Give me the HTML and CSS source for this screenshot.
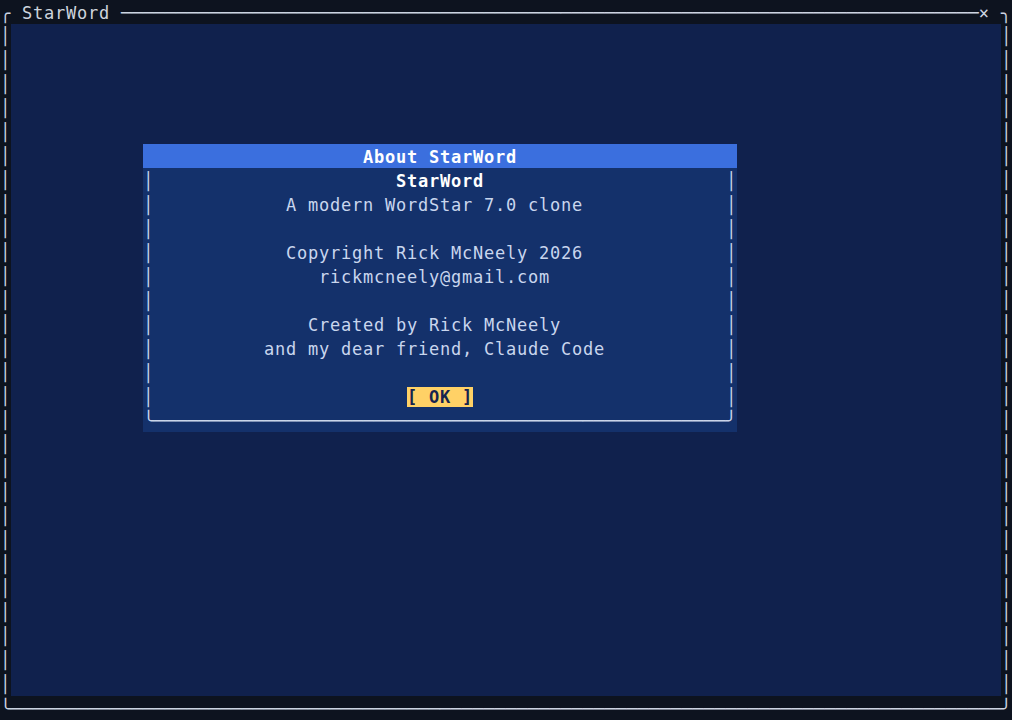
FILE: index.html
```html
<!DOCTYPE html>
<html lang="en">
<head>
    <meta charset="UTF-8">
    <meta name="viewport" content="width=device-width, initial-scale=1.0">
    <title>StarWord</title>
    <link rel="stylesheet" href="styles.css">
</head>
<body>

<div class="term">
    <!-- Window frame, top edge with the title and close mark -->
    <div class="frame-row">╭ <span class="app-name">StarWord</span> <span class="rule">──────────────────────────────────────────────────────────────────────────────</span>× ╮</div>

    <div class="frame-middle">
        <div class="frame-side">│
│
│
│
│
│
│
│
│
│
│
│
│
│
│
│
│
│
│
│
│
│
│
│
│
│
│
│</div>

        <!-- Editor area -->
        <div class="desk">
            <div class="dialog" role="dialog" aria-labelledby="about-title">
                <div class="dialog-title" id="about-title">About StarWord</div>
                <div class="dialog-body">
                    <div class="line"><span class="edge">│</span><span class="cell"><b class="product">                      StarWord</b></span><span class="edge">│</span></div>
                    <div class="line"><span class="edge">│</span><span class="cell">            A modern WordStar 7.0 clone</span><span class="edge">│</span></div>
                    <div class="line"><span class="edge">│</span><span class="cell"></span><span class="edge">│</span></div>
                    <div class="line"><span class="edge">│</span><span class="cell">            Copyright Rick McNeely 2026</span><span class="edge">│</span></div>
                    <div class="line"><span class="edge">│</span><span class="cell">               rickmcneely@gmail.com</span><span class="edge">│</span></div>
                    <div class="line"><span class="edge">│</span><span class="cell"></span><span class="edge">│</span></div>
                    <div class="line"><span class="edge">│</span><span class="cell">              Created by Rick McNeely</span><span class="edge">│</span></div>
                    <div class="line"><span class="edge">│</span><span class="cell">          and my dear friend, Claude Code</span><span class="edge">│</span></div>
                    <div class="line"><span class="edge">│</span><span class="cell"></span><span class="edge">│</span></div>
                    <div class="line"><span class="edge">│</span><span class="cell">                       <span class="ok-button">[ OK ]</span></span><span class="edge">│</span></div>
                    <div class="line"><span class="rule">╰────────────────────────────────────────────────────╯</span></div>
                </div>
            </div>
        </div>

        <div class="frame-side">│
│
│
│
│
│
│
│
│
│
│
│
│
│
│
│
│
│
│
│
│
│
│
│
│
│
│
│</div>
    </div>

    <!-- Window frame, bottom edge -->
    <div class="frame-row"><span class="rule">╰──────────────────────────────────────────────────────────────────────────────────────────╯</span></div>
</div>

</body>
</html>
```

FILE: styles.css
```css
body {
    margin: 0;
    padding: 0;
    background: #0d131f;
}

/* every cell is 11px wide and 24px tall */
.term {
    width: 1012px;
    height: 720px;
    font-family: "DejaVu Sans Mono", monospace;
    font-size: 17px;
    line-height: 24px;
    letter-spacing: 0.765px;
    color: #ccd4e2;
    overflow: hidden;
}

/* box lines drawn at the full cell width so the runs join up */
.rule {
    font-size: 18.27px;
    letter-spacing: 0;
}

.frame-row {
    height: 24px;
    padding-top: 1px;
    box-sizing: border-box;
    white-space: pre;
}

.app-name {
    color: #cdd3dd;
}

.frame-middle {
    display: flex;
    height: 672px;
}

.frame-side {
    width: 11px;
    flex: none;
    white-space: pre;
}

.desk {
    width: 990px;
    background: #10214d;
    padding: 120px 0 0 132px;
    box-sizing: border-box;
}

.dialog {
    width: 594px;
    background: #14316b;
    color: #c9d6ee;
}

.dialog-title {
    background: #3b6fde;
    color: #ffffff;
    font-weight: bold;
    text-align: center;
    height: 24px;
    padding-top: 1px;
    box-sizing: border-box;
}

.line {
    display: flex;
    height: 24px;
    padding-top: 1px;
    box-sizing: border-box;
    color: #cad5ea;
    white-space: pre;
}

.edge {
    width: 11px;
    flex: none;
}

.cell {
    flex: 1;
    color: #c9d6ee;
}

.product {
    color: #ffffff;
}

.ok-button {
    background: #ffd166;
    color: #16244f;
    font-weight: bold;
}
```
